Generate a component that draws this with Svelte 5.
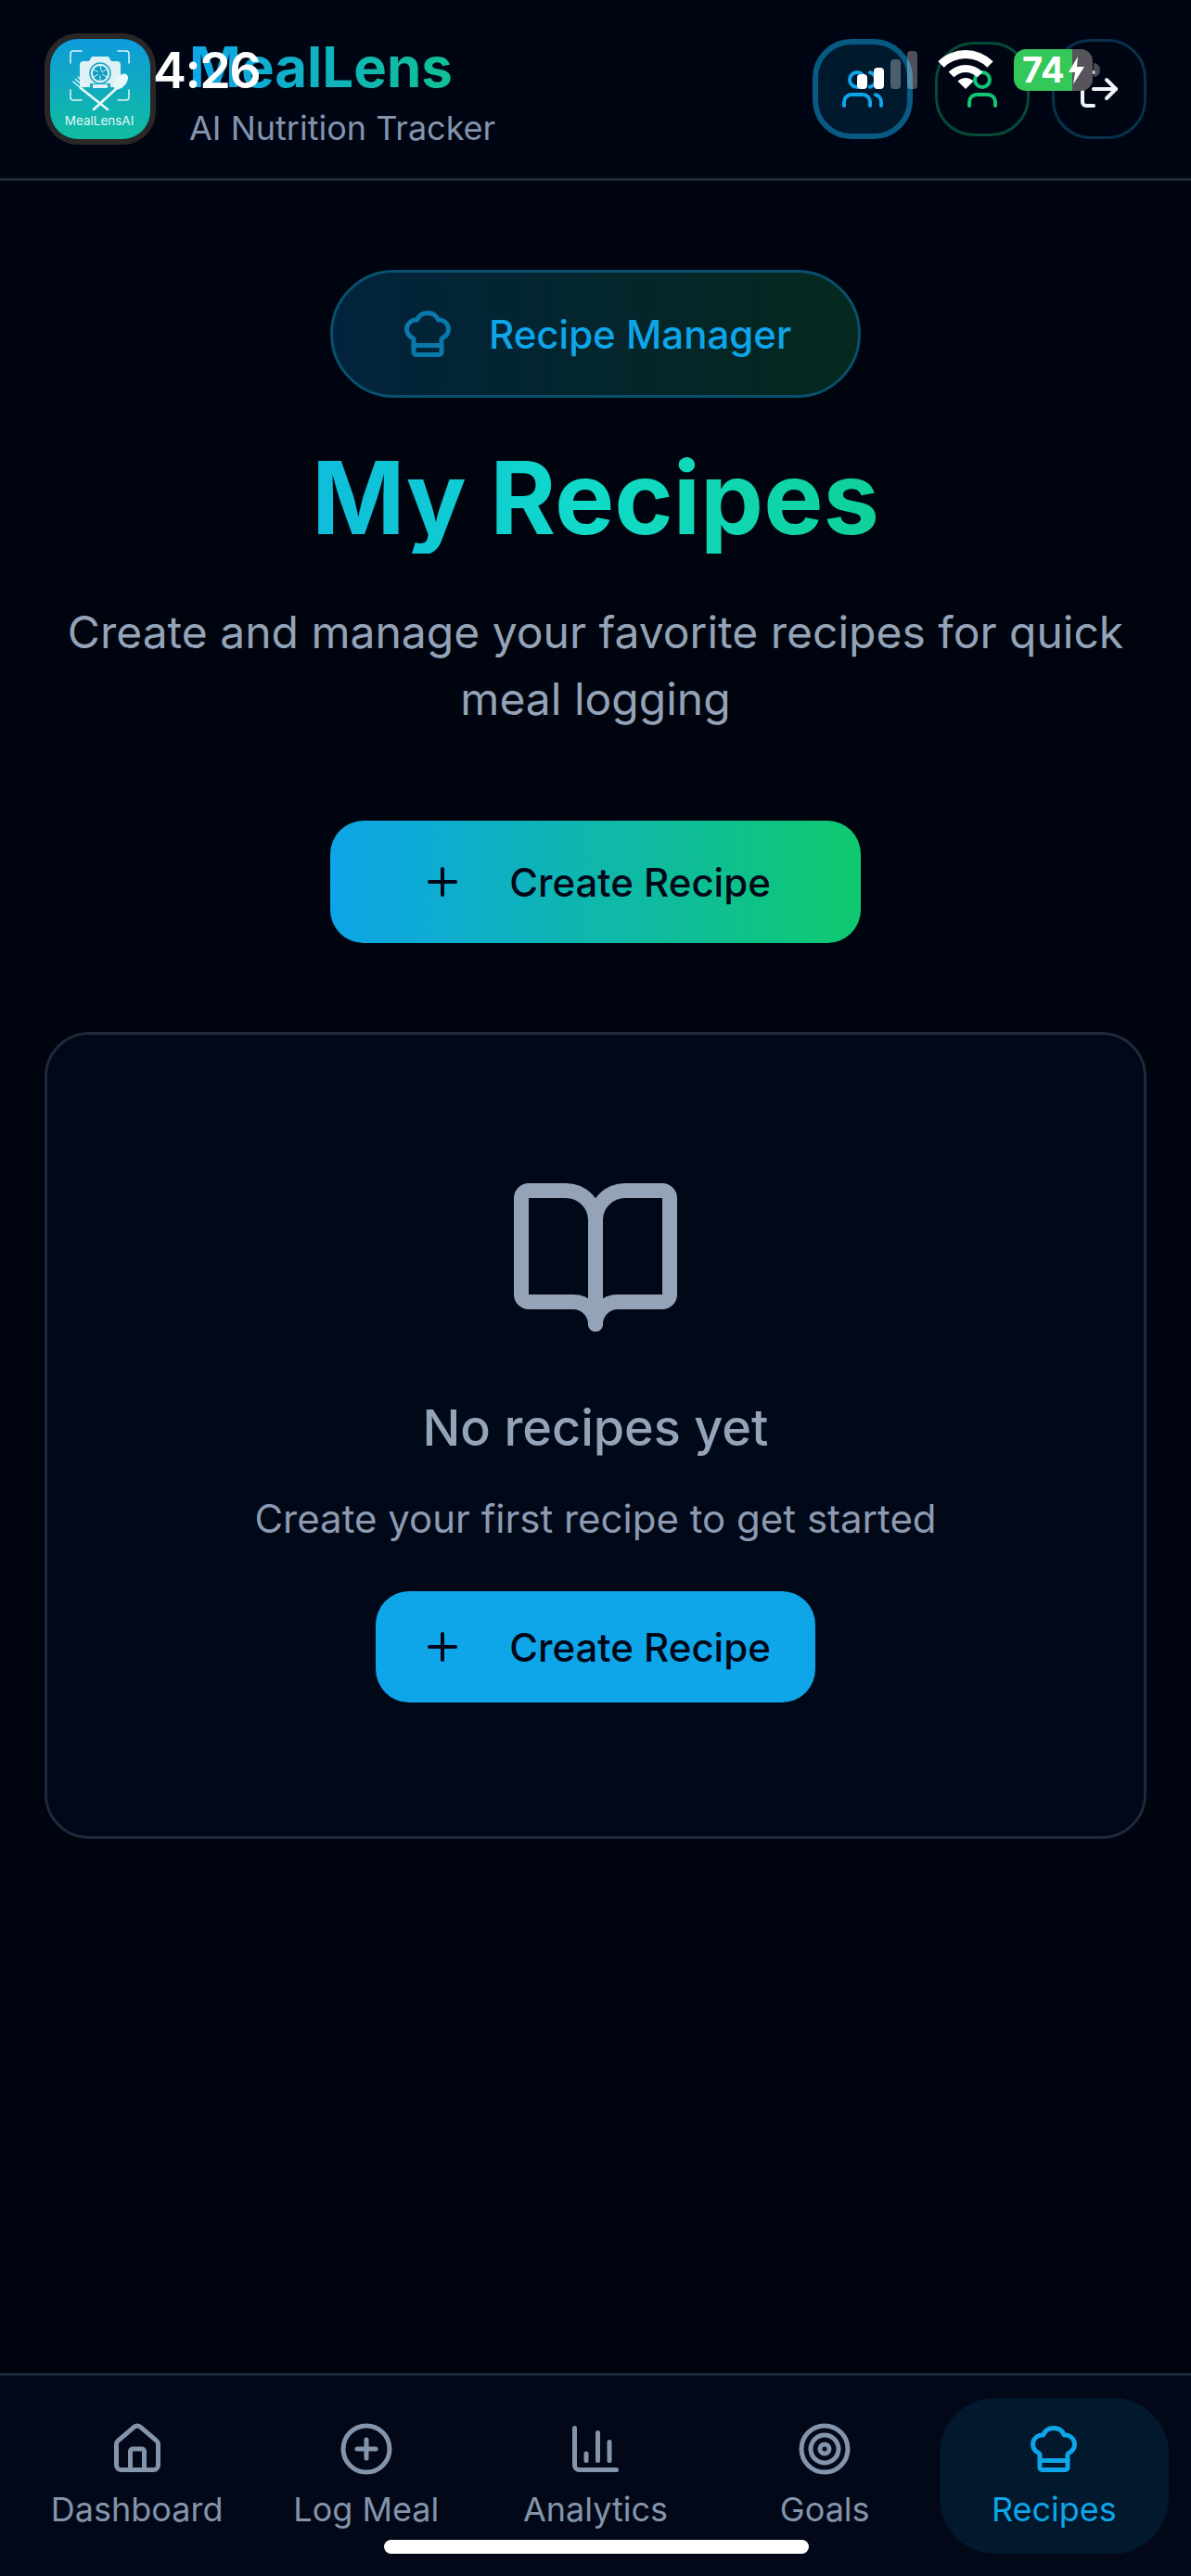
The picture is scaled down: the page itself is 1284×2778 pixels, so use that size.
<script>
    const chefHat = {
        paths: [
            "M17 21a1 1 0 0 0 1-1v-5.35c0-.457.316-.844.727-1.041a4 4 0 0 0-2.134-7.589 5 5 0 0 0-9.186 0 4 4 0 0 0-2.134 7.588c.411.198.727.585.727 1.041V20a1 1 0 0 0 1 1Z",
            "M6 17h12",
        ],
        circles: [],
    };

    const tabs = [
        {
            label: "Dashboard",
            paths: [
                "M15 21v-8a1 1 0 0 0-1-1h-4a1 1 0 0 0-1 1v8",
                "M3 10a2 2 0 0 1 .709-1.528l7-5.999a2 2 0 0 1 2.582 0l7 5.999A2 2 0 0 1 21 10v9a2 2 0 0 1-2 2H5a2 2 0 0 1-2-2z",
            ],
            circles: [],
        },
        { label: "Log Meal", paths: ["M8 12h8", "M12 8v8"], circles: [10] },
        {
            label: "Analytics",
            paths: ["M3 3v16a2 2 0 0 0 2 2h16", "M18 17V9", "M13 17V5", "M8 17v-3"],
            circles: [],
        },
        { label: "Goals", paths: [], circles: [10, 6, 2] },
        { label: "Recipes", active: true, ...chefHat },
    ];
</script>

<div class="app">
    <header class="topbar">
        <div class="brand">
            <svg class="logo" viewBox="0 0 108 108">
                <defs>
                    <linearGradient id="logo-bg" x1="0" y1="0" x2="0" y2="1">
                        <stop offset="0" stop-color="#0f9bdc" />
                        <stop offset="1" stop-color="#10bd9e" />
                    </linearGradient>
                </defs>
                <rect width="108" height="108" fill="url(#logo-bg)" />
                <g fill="none" stroke="#e4f5f7" stroke-width="1.5" stroke-linecap="round">
                    <path d="M22 26v-10a3 3 0 0 1 3-3h9" />
                    <path d="M73 13h9a3 3 0 0 1 3 3v10" />
                    <path d="M22 55v8a3 3 0 0 0 3 3h9" />
                    <path d="M73 66h9a3 3 0 0 0 3-3v-8" />
                </g>
                <path
                    d="M36 24h6l3-5h18l3 5h6a4 4 0 0 1 4 4v24h-44v-24a4 4 0 0 1 4-4z"
                    fill="#dff1f4"
                />
                <circle cx="54" cy="37" r="13.500" fill="#dff1f4" />
                <circle cx="54" cy="37" r="11" fill="none" stroke="#12a5c9" stroke-width="1.500" />
                <circle cx="54" cy="37" r="8" fill="#0f9cc0" />
                <g stroke="#dff1f4" stroke-width="1">
                    <path d="M54 29l2 8M61 33l-7 4M61 41l-7-4M54 45l0-8M47 41l7-4M47 33l7 4" />
                </g>
                <circle cx="54" cy="37" r="2.500" fill="#0f9cc0" />
                <path d="M43 48h22v7h-22z" fill="#12a9bf" />
                <path d="M46 49h16v4h-16z" fill="#dff1f4" />
                <g stroke="#e8f7f7" stroke-linecap="round" fill="none">
                    <path d="M33 53l29 23" stroke-width="2.800" />
                    <path d="M25 46l9 8M27.500 43.500l9 8M30 41l8 8" stroke-width="1.200" />
                    <path d="M72 53l-25 23" stroke-width="2.800" />
                </g>
                <ellipse cx="76" cy="46" rx="6" ry="10" transform="rotate(42 76 46)" fill="#e8f7f7" />
                <text class="logo-text" x="53" y="93" text-anchor="middle">MealLensAI</text>
            </svg>
            <div class="brand-text">
                <div class="brand-name">MealLens</div>
                <div class="brand-sub">AI Nutrition Tracker</div>
            </div>
        </div>
        <div class="actions">
            <button class="action action-users">
                <svg class="icon-sm" viewBox="0 0 24 24">
                    <path d="M16 21v-2a4 4 0 0 0-4-4H6a4 4 0 0 0-4 4v2" />
                    <path d="M16 3.128a4 4 0 0 1 0 7.744" />
                    <path d="M22 21v-2a4 4 0 0 0-3-3.870" />
                    <circle cx="9" cy="7" r="4" />
                </svg>
            </button>
            <button class="action action-user">
                <svg class="icon-sm" viewBox="0 0 24 24">
                    <path d="M19 21v-2a4 4 0 0 0-4-4H9a4 4 0 0 0-4 4v2" />
                    <circle cx="12" cy="7" r="4" />
                </svg>
            </button>
            <button class="action action-logout">
                <svg class="icon-sm" viewBox="0 0 24 24">
                    <path d="m16 17 5-5-5-5" />
                    <path d="M21 12H9" />
                    <path d="M9 21H5a2 2 0 0 1-2-2V5a2 2 0 0 1 2-2h4" />
                </svg>
            </button>
        </div>
    </header>

    <main class="content">
        <div class="pill">
            <svg class="icon-md pill-icon" viewBox="0 0 24 24">
                {#each chefHat.paths as d}<path {d} />{/each}
            </svg>
            <span>Recipe Manager</span>
        </div>
        <h1>My Recipes</h1>
        <p class="lead">Create and manage your favorite recipes for quick meal logging</p>
        <button class="create create-main">
            <svg class="icon-sm" viewBox="0 0 24 24"><path d="M5 12h14" /><path d="M12 5v14" /></svg>
            <span>Create Recipe</span>
        </button>

        <section class="empty">
            <svg class="book" viewBox="0 0 24 24">
                <path d="M12 7v14" />
                <path d="M3 18a1 1 0 0 1-1-1V4a1 1 0 0 1 1-1h5a4 4 0 0 1 4 4 4 4 0 0 1 4-4h5a1 1 0 0 1 1 1v13a1 1 0 0 1-1 1h-6a3 3 0 0 0-3 3 3 3 0 0 0-3-3z" />
            </svg>
            <h2>No recipes yet</h2>
            <p>Create your first recipe to get started</p>
            <button class="create create-empty">
                <svg class="icon-sm" viewBox="0 0 24 24"><path d="M5 12h14" /><path d="M12 5v14" /></svg>
                <span>Create Recipe</span>
            </button>
        </section>
    </main>

    <nav class="tabs">
        {#each tabs as tab}
            <div class="tab" class:active={tab.active}>
                <svg class="icon-md" viewBox="0 0 24 24">
                    {#each tab.circles as r}<circle cx="12" cy="12" {r} />{/each}
                    {#each tab.paths as d}<path {d} />{/each}
                </svg>
                <span>{tab.label}</span>
            </div>
        {/each}
    </nav>

    <!-- phone status bar, sits over the app header -->
    <div class="status">
        <span class="time">4:26</span>
        <div class="signal">
            <i class="b1"></i><i class="b2"></i><i class="b3 off"></i><i class="b4 off"></i>
        </div>
        <svg class="wifi" viewBox="0 0 58 42">
            <path d="M-.7 12.300A42 42 0 0 1 58.700 12.300L52.300 18.700A33 33 0 0 0 5.700 18.700Z" />
            <path d="M10.600 23.600A26 26 0 0 1 47.400 23.600L41.700 29.300A18 18 0 0 0 16.300 29.300Z" />
            <path d="M20.500 33.500A12 12 0 0 1 37.500 33.500L29 42Z" />
        </svg>
        <div class="battery">
            <span>74</span>
            <svg class="bolt" viewBox="0 0 17 30"><path d="M10 0 0 17h7L5 30 17 11H9Z" /></svg>
        </div>
    </div>
    <div class="home-bar"></div>
</div>

<style>
    :global(body) {
        margin: 0;
        background: #00040e;
    }

    .app {
        position: relative;
        min-height: 2778px;
        display: flex;
        flex-direction: column;
        background: #00040e;
        color: #94a3b8;
        font-family: Inter, "Noto Sans", sans-serif;
    }

    svg {
        fill: none;
        stroke: currentColor;
        stroke-width: 2;
        stroke-linecap: round;
        stroke-linejoin: round;
        flex-shrink: 0;
    }

    .icon-sm {
        width: 48px;
        height: 48px;
    }

    .icon-md {
        width: 60px;
        height: 60px;
    }

    button {
        font-family: inherit;
        cursor: pointer;
    }

    .topbar {
        height: 195px;
        box-sizing: border-box;
        padding: 0 48px;
        display: flex;
        align-items: center;
        justify-content: space-between;
        background: #000514;
        border-bottom: 3px solid #1e293b;
    }

    .brand {
        display: flex;
        align-items: center;
        gap: 36px;
    }

    .logo {
        width: 108px;
        height: 108px;
        border: 6px solid #2a2727;
        border-radius: 36px;
        stroke: none;
    }

    .logo-text {
        font-family: Inter, sans-serif;
        font-size: 13.500px;
        fill: #e4f5f7;
        stroke: none;
    }

    .brand-name {
        font-size: 60px;
        line-height: 84px;
        font-weight: 700;
        background: linear-gradient(90deg, #0ea5e9, #10c585);
        -webkit-background-clip: text;
        background-clip: text;
        color: transparent;
    }

    .brand-sub {
        font-size: 36px;
        line-height: 48px;
        color: #8494ab;
    }

    .actions {
        display: flex;
        align-items: center;
        gap: 24px;
    }

    .action {
        box-sizing: border-box;
        width: 102px;
        height: 108px;
        padding: 0;
        display: flex;
        align-items: center;
        justify-content: center;
        border-radius: 42px;
        background: transparent;
        border: 3px solid #08324b;
    }

    .action-users {
        width: 108px;
        border: 6px solid #085a82;
        background: #01192d;
        color: #0ea5e9;
    }

    .action-user {
        height: 102px;
        border-color: #054b37;
        color: #10c573;
    }

    .action-logout {
        color: #f1f5f9;
    }

    .content {
        flex: 1;
        padding: 96px 48px;
        display: flex;
        flex-direction: column;
        align-items: center;
    }

    .pill {
        box-sizing: border-box;
        width: 572px;
        height: 138px;
        padding: 0 72px;
        display: flex;
        align-items: center;
        gap: 36px;
        border: 3px solid #08506e;
        border-radius: 69px;
        background: linear-gradient(90deg, #02233c, #05281e);
        color: #0ea5e9;
        font-size: 42px;
        font-weight: 500;
        white-space: nowrap;
    }

    .pill-icon {
        opacity: 0.65;
    }

    h1 {
        margin: 48px 0 0;
        font-size: 108px;
        line-height: 120px;
        font-weight: 700;
        background: linear-gradient(90deg, #0fbcdc, #10dbc8 50%, #10d098);
        -webkit-background-clip: text;
        background-clip: text;
        color: transparent;
    }

    .lead {
        margin: 49px 0 0;
        max-width: 1188px;
        font-size: 48px;
        line-height: 72px;
        text-align: center;
        color: #94a3b8;
    }

    .create {
        box-sizing: border-box;
        display: flex;
        align-items: center;
        justify-content: center;
        gap: 48px;
        border: none;
        color: #020617;
        font-size: 42px;
        font-weight: 500;
        white-space: nowrap;
    }

    .create-main {
        width: 572px;
        height: 132px;
        margin-top: 95px;
        border-radius: 36px;
        background: linear-gradient(90deg, #0ea5e9, #0fc96f);
    }

    .create-empty {
        height: 120px;
        padding: 0 48px;
        border-radius: 36px;
        background: #0ea5e9;
    }

    .empty {
        box-sizing: border-box;
        width: 100%;
        margin-top: 96px;
        padding: 144px 48px;
        display: flex;
        flex-direction: column;
        align-items: center;
        border: 3px solid #1e293b;
        border-radius: 48px;
        background: #010818;
    }

    .book {
        width: 192px;
        height: 192px;
        color: #94a3b8;
    }

    .empty h2 {
        margin: 46px 0 0;
        font-size: 54px;
        line-height: 84px;
        font-weight: 500;
        color: #94a3b8;
    }

    .empty p {
        margin: 26px 0 48px;
        font-size: 42px;
        line-height: 60px;
        color: #8c9bb1;
    }

    .tabs {
        height: 219px;
        box-sizing: border-box;
        padding: 24px;
        display: grid;
        grid-template-columns: repeat(5, 1fr);
        background: #020817;
        border-top: 3px solid #1e293b;
    }

    .tab {
        display: flex;
        flex-direction: column;
        align-items: center;
        justify-content: center;
        gap: 11px;
        border-radius: 60px;
        color: #8494ab;
        font-size: 36px;
        line-height: 48px;
    }

    .tab.active {
        background: #02182c;
        color: #0ea5e9;
    }

    .status {
        position: absolute;
        top: 0;
        left: 0;
        right: 0;
        height: 98px;
        box-sizing: border-box;
        padding: 0 106px 0 165px;
        display: flex;
        align-items: flex-end;
        gap: 23px;
        color: #fff;
        pointer-events: none;
    }

    .time {
        margin-right: auto;
        font-size: 54px;
        line-height: 54px;
        font-weight: 600;
        letter-spacing: -1.500px;
        margin-bottom: -5px;
    }

    .signal {
        display: flex;
        align-items: flex-end;
        gap: 7px;
        margin-bottom: 2px;
    }

    .signal i {
        width: 11px;
        border-radius: 4px;
        background: #fff;
    }

    .signal .b1 {
        height: 16px;
    }

    .signal .b2 {
        height: 23px;
    }

    .signal .b3 {
        height: 32px;
    }

    .signal .b4 {
        height: 41px;
    }

    .signal .off {
        background: rgba(255, 255, 255, 0.3);
    }

    .wifi {
        width: 58px;
        height: 42px;
        margin-bottom: 2px;
        overflow: visible;
        fill: #fff;
        stroke: none;
    }

    .battery {
        position: relative;
        width: 85px;
        height: 45px;
        box-sizing: border-box;
        padding-left: 9px;
        display: flex;
        align-items: center;
        gap: 4px;
        border-radius: 13px;
        background: linear-gradient(90deg, #34c759 74%, #55555b 74%);
        font-size: 38px;
        font-weight: 700;
        line-height: 45px;
    }

    .battery::after {
        content: "";
        position: absolute;
        left: 86px;
        top: 15px;
        width: 7px;
        height: 15px;
        border-radius: 0 8px 8px 0;
        background: rgba(120, 120, 128, 0.6);
    }

    .bolt {
        width: 17px;
        height: 30px;
        fill: #fff;
        stroke: none;
    }

    .home-bar {
        position: absolute;
        left: 414px;
        bottom: 24px;
        width: 458px;
        height: 15px;
        border-radius: 8px;
        background: #fff;
    }
</style>
